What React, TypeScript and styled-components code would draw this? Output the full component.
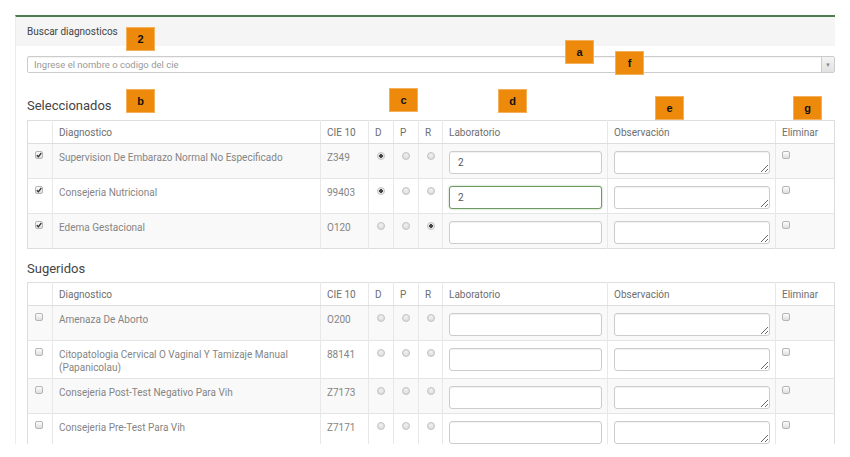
import React from "react";
import styled, { createGlobalStyle, css } from "styled-components";

const GlobalStyle = createGlobalStyle`
  body {
    margin: 0;
    background: #fff;
    font-family: Roboto, "Liberation Sans", sans-serif;
  }
`;

const Page = styled.div`
  position: relative;
  width: 850px;
  height: 457px;
  padding: 15px 15px 0 15px;
  box-sizing: border-box;
  overflow: hidden;
`;

const Panel = styled.div`
  height: 429px;
  overflow: hidden;
  border-top: 2px solid #4f7b4f;
  border-left: 1px solid #ececec;
  box-sizing: border-box;
`;

const PanelHeading = styled.div`
  height: 29px;
  line-height: 29px;
  padding-left: 11px;
  background: #f5f5f5;
  font-size: 10px;
  color: #444;
`;

const PanelBody = styled.div`
  padding: 10px 0 0 11px;
`;

const SelectBox = styled.div`
  display: flex;
  align-items: stretch;
  height: 17px;
  border: 1px solid #ccc;
  border-radius: 2px;
  box-sizing: border-box;
  box-shadow: inset 0 1px 1px rgba(0, 0, 0, 0.05);
`;

const SelectText = styled.div`
  flex: 1;
  padding-left: 6px;
  font-size: 9.5px;
  line-height: 15px;
  color: #999;
`;

const SelectArrow = styled.div`
  width: 12px;
  border-left: 1px solid #ccc;
  background: linear-gradient(#f4f4f4, #e2e2e2);
  display: flex;
  align-items: center;
  justify-content: center;
  font-size: 6px;
  color: #888;
`;

const SectionTitle = styled.h4<{ $top: number; $bottom: number }>`
  margin: ${(p) => p.$top}px 0 ${(p) => p.$bottom}px 0;
  font-size: 13px;
  line-height: 16px;
  font-weight: normal;
  color: #444;
`;

const Table = styled.table`
  width: 807px;
  table-layout: fixed;
  border-collapse: collapse;
  border: 1px solid #ddd;
  font-size: 10px;
  color: #858585;
`;

const Th = styled.th`
  height: 22px;
  padding: 0 6px;
  text-align: left;
  font-weight: normal;
  color: #6e6e6e;
  border-left: 1px solid #e8e8e8;
  border-bottom: 1px solid #ddd;
  &:first-child {
    border-left: none;
  }
`;

const Row = styled.tr`
  &:nth-child(odd) {
    background: #f9f9f9;
  }
`;

const Td = styled.td<{ $center?: boolean }>`
  padding: 7px 6px 4px 6px;
  vertical-align: top;
  line-height: 13px;
  border-left: 1px solid #e8e8e8;
  border-top: 1px solid #e5e5e5;
  text-align: ${(p) => (p.$center ? "center" : "left")};
  &:first-child {
    border-left: none;
    padding-left: 7px;
  }
`;

const Check = styled.span`
  display: inline-flex;
  align-items: center;
  justify-content: center;
  width: 8px;
  height: 8px;
  border: 1px solid #b5b5b5;
  border-radius: 2px;
  background: linear-gradient(#fdfdfd, #dedede);
  box-sizing: border-box;
  vertical-align: top;
`;

const Radio = styled.span<{ $checked?: boolean }>`
  display: inline-block;
  width: 8px;
  height: 8px;
  border-radius: 50%;
  border: 1px solid #c4c4c4;
  box-sizing: border-box;
  vertical-align: top;
  margin-top: 1px;
  background: radial-gradient(circle at 50% 35%, #f2f2f2, #d4d4d4);
  ${(p) =>
    p.$checked &&
    css`
      background: radial-gradient(circle, #444 0 1.6px, #e8e8e8 2px);
    `}
`;

const TextInput = styled.input<{ $focus?: boolean }>`
  display: block;
  width: 153px;
  height: 23px;
  padding: 0 8px;
  box-sizing: border-box;
  border: 1px solid #ccc;
  border-radius: 3px;
  background: #fff;
  font-family: Roboto, "Liberation Sans", sans-serif;
  font-size: 10px;
  color: #555;
  outline: none;
  box-shadow: inset 0 1px 1px rgba(0, 0, 0, 0.06);
  ${(p) =>
    p.$focus &&
    css`
      border-color: #6f9a64;
      box-shadow: 0 0 2px rgba(90, 140, 80, 0.6);
    `}
`;

const NoteInput = styled.textarea`
  display: block;
  width: 156px;
  height: 23px;
  padding: 2px 6px;
  box-sizing: border-box;
  border: 1px solid #ccc;
  border-radius: 3px;
  background: #fff;
  font-size: 10px;
  resize: vertical;
  outline: none;
  box-shadow: inset 0 1px 1px rgba(0, 0, 0, 0.06);
`;

const Badge = styled.div<{ $x: number; $y: number }>`
  position: absolute;
  left: ${(p) => p.$x}px;
  top: ${(p) => p.$y}px;
  width: 29px;
  height: 24px;
  background: #ed8a0b;
  border: 1px solid #f3b15c;
  box-sizing: border-box;
  display: flex;
  align-items: center;
  justify-content: center;
  font-family: "Liberation Sans", Arial, sans-serif;
  font-weight: bold;
  font-size: 11px;
  color: #111;
`;

type Diag = {
  name: string;
  code: string;
  checked: boolean;
  sel?: "D" | "P" | "R";
  lab?: string;
  focus?: boolean;
};

const selected: Diag[] = [
  { name: "Supervision De Embarazo Normal No Especificado", code: "Z349", checked: true, sel: "D", lab: "2" },
  { name: "Consejeria Nutricional", code: "99403", checked: true, sel: "D", lab: "2", focus: true },
  { name: "Edema Gestacional", code: "O120", checked: true, sel: "R" },
];

const suggested: Diag[] = [
  { name: "Amenaza De Aborto", code: "O200", checked: false },
  { name: "Citopatologia Cervical O Vaginal Y Tamizaje Manual (Papanicolau)", code: "88141", checked: false },
  { name: "Consejeria Post-Test Negativo Para Vih", code: "Z7173", checked: false },
  { name: "Consejeria Pre-Test Para Vih", code: "Z7171", checked: false },
];

const widths = [25, 268, 48, 25, 25, 24, 165, 168, 59];
const headers = ["", "Diagnostico", "CIE 10", "D", "P", "R", "Laboratorio", "Observación", "Eliminar"];

function Tick() {
  return (
    <svg width="6" height="6" viewBox="0 0 6 6">
      <path d="M0.8 3.2 L2.4 4.8 L5.3 1" fill="none" stroke="#333" strokeWidth="1.3" />
    </svg>
  );
}

function DiagTable(props: { rows: Diag[] }) {
  return (
    <Table>
      <colgroup>
        {widths.map((w, i) => (
          <col key={i} style={{ width: w }} />
        ))}
      </colgroup>
      <thead>
        <tr>
          {headers.map((h, i) => (
            <Th key={i}>{h}</Th>
          ))}
        </tr>
      </thead>
      <tbody>
        {props.rows.map((r) => (
          <Row key={r.code}>
            <Td>
              <Check>{r.checked ? <Tick /> : null}</Check>
            </Td>
            <Td>{r.name}</Td>
            <Td>{r.code}</Td>
            {(["D", "P", "R"] as const).map((k) => (
              <Td key={k} $center>
                <Radio $checked={r.sel === k} />
              </Td>
            ))}
            <Td>
              <TextInput readOnly value={r.lab ?? ""} $focus={r.focus} />
            </Td>
            <Td>
              <NoteInput readOnly />
            </Td>
            <Td>
              <Check />
            </Td>
          </Row>
        ))}
      </tbody>
    </Table>
  );
}

export default function App() {
  return (
    <Page>
      <GlobalStyle />
      <Panel>
        <PanelHeading>Buscar diagnosticos</PanelHeading>
        <PanelBody>
          <SelectBox>
            <SelectText>Ingrese el nombre o codigo del cie</SelectText>
            <SelectArrow>▼</SelectArrow>
          </SelectBox>
          <SectionTitle $top={25} $bottom={6}>Seleccionados</SectionTitle>
          <DiagTable rows={selected} />
          <SectionTitle $top={12} $bottom={5}>Sugeridos</SectionTitle>
          <DiagTable rows={suggested} />
        </PanelBody>
      </Panel>

      <Badge $x={126} $y={27}>2</Badge>
      <Badge $x={565} $y={40}>a</Badge>
      <Badge $x={615} $y={51}>f</Badge>
      <Badge $x={126} $y={89}>b</Badge>
      <Badge $x={389} $y={88}>c</Badge>
      <Badge $x={498} $y={89}>d</Badge>
      <Badge $x={655} $y={96}>e</Badge>
      <Badge $x={793} $y={96}>g</Badge>
    </Page>
  );
}
